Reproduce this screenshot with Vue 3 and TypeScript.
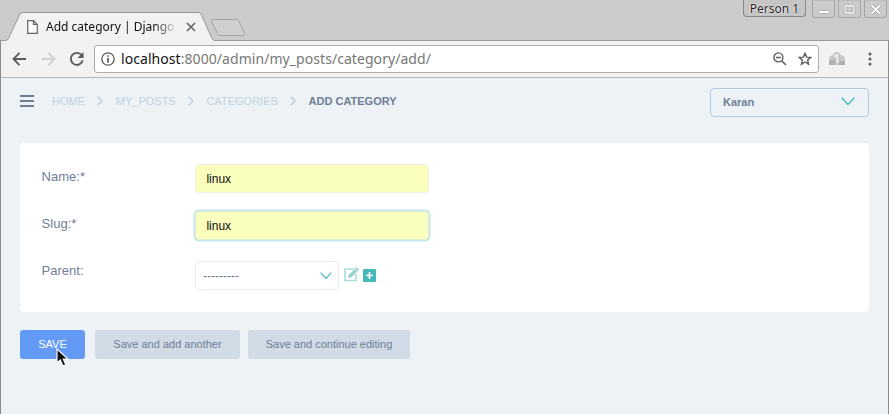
<script setup lang="ts">
import { ref } from 'vue'

interface Field { id: string; label: string; value: string; focused: boolean }

const crumbs: string[] = ['HOME', 'MY_POSTS', 'CATEGORIES']
const fields = ref<Field[]>([
  { id: 'name', label: 'Name:*', value: 'linux', focused: false },
  { id: 'slug', label: 'Slug:*', value: 'linux', focused: true },
])
</script>

<template>
  <div class="window">
    <header class="tabstrip">
      <svg class="tabshape" width="889" height="41" viewBox="0 0 889 41">
        <path d="M0 41V40.5H5.500Q7.500 40.500 8.500 38.500L19.500 15Q20.500 12.500 22.500 12.500H198.500Q200.500 12.500 201.500 15L212 38.500Q213 40.500 215 40.500H889V41Z" fill="#f2f2f2" />
        <path d="M0 40.500H5.500Q7.500 40.500 8.500 38.500L19.500 15Q20.500 12.500 22.500 12.500H198.500Q200.500 12.500 201.500 15L212 38.500Q213 40.500 215 40.500H889" fill="none" stroke="#999" />
        <path d="M213 19.500H236Q238 19.500 239 21.500L244.500 33.500Q245 35.500 243 35.500H220Q218.500 35.500 217.500 33.500L211.500 21.500Q211 19.500 213 19.500Z" fill="#d0d0d0" stroke="#a2a2a2" />
      </svg>
      <div class="tab">
        <svg class="doc" width="11" height="14" viewBox="0 0 11 14"><path d="M.7.700H6.500L10.300 4.500V13.300H.7ZM6.500.7V4.500H10.300" fill="#fafafa" stroke="#666" stroke-width="1.200" /></svg>
        <span class="title">Add category | Django s</span>
        <svg width="10" height="10" viewBox="0 0 10 10"><path d="M1 1L9 9M9 1L1 9" stroke="#666" stroke-width="1.700" /></svg>
      </div>
      <div class="controls">
        <span class="person">Person 1</span>
        <span class="ctl"><svg width="21" height="17"><rect x="5.500" y="9.500" width="11" height="3" rx="1" fill="#fff" stroke="#999" stroke-width=".7" /></svg></span>
        <span class="ctl"><svg width="21" height="17"><rect x="6" y="5" width="9" height="7" rx="1" fill="none" stroke="#999" stroke-width="2.600" /><rect x="6" y="5" width="9" height="7" rx="1" fill="none" stroke="#fff" stroke-width="1.300" /></svg></span>
        <span class="ctl"><svg width="21" height="17"><path d="M6.500 4.500L15 12.500M15 4.500L6.500 12.500" stroke="#999" stroke-width="3.200" /><path d="M6.500 4.500L15 12.500M15 4.500L6.500 12.500" stroke="#fff" stroke-width="2" /></svg></span>
      </div>
    </header>

    <div class="toolbar">
      <svg class="back" width="16" height="14" viewBox="0 0 16 14"><path d="M7.500 .8L1.500 7L7.500 13.200M2 7H14" fill="none" stroke="#5c5c5c" stroke-width="1.900" /></svg>
      <svg class="forward" width="15" height="14" viewBox="0 0 15 14"><path d="M7.500 .8L13.500 7L7.500 13.200M13 7H1" fill="none" stroke="#d0d0d0" stroke-width="1.900" /></svg>
      <svg class="reload" width="16" height="16" viewBox="0 0 16 16"><path d="M12.800 4.500A6 6 0 1 0 13.700 9.300" fill="none" stroke="#5c5c5c" stroke-width="1.900" /><path d="M14.500 1V7H8.500Z" fill="#5c5c5c" /></svg>
      <div class="address">
        <svg width="14" height="14" viewBox="0 0 14 14"><circle cx="7" cy="7" r="6.200" fill="none" stroke="#5c5c5c" stroke-width="1.300" /><path d="M7 3.200V4.800M7 6V10.700" stroke="#5c5c5c" stroke-width="1.700" /></svg>
        <span class="url"><b>localhost</b>:8000/admin/my_posts/category/add/</span>
        <svg class="lens" width="14" height="14" viewBox="0 0 14 14"><circle cx="5.400" cy="5.400" r="4.500" fill="none" stroke="#5c5c5c" stroke-width="1.400" /><path d="M8.700 8.700L13 13M3 5.400H7.800" stroke="#5c5c5c" stroke-width="1.500" /></svg>
        <svg width="14" height="14" viewBox="0 0 14 14"><path d="M7 1.300L8.600 5.100L12.800 5.400L9.600 8.100L10.600 12.200L7 10L3.400 12.200L4.400 8.100L1.200 5.400L5.400 5.100Z" fill="none" stroke="#5c5c5c" stroke-width="1.400" /></svg>
      </div>
      <svg class="ext" width="16" height="14" viewBox="0 0 16 14"><path d="M0 13V6Q1 3.500 4 3Q5.500 0 8 0Q10.500 0 12 3Q15 3.500 16 6V13Z" fill="#c8c8c8" /><path d="M0 8H6V13H0ZM10 9H16V13H10Z" fill="#b0b0b0" /><path d="M5.500 4.500L8.300 3V9.500H10" fill="none" stroke="#f5f5f5" stroke-width="1.500" /></svg>
      <svg class="dots" width="4" height="14" viewBox="0 0 4 14"><circle cx="2" cy="2" r="1.500" fill="#5c5c5c" /><circle cx="2" cy="7" r="1.500" fill="#5c5c5c" /><circle cx="2" cy="12" r="1.500" fill="#5c5c5c" /></svg>
    </div>

    <main class="page">
      <div class="topbar">
        <svg class="burger" width="14" height="12" viewBox="0 0 14 12"><path d="M0 1H14M0 6H14M0 11H14" stroke="#6f7e95" stroke-width="2" /></svg>
        <nav class="crumbs">
          <template v-for="crumb in crumbs" :key="crumb">
            <a>{{ crumb }}</a>
            <svg width="6" height="10" viewBox="0 0 6 10"><path d="M.8 .8L5 5L.8 9.200" fill="none" stroke="#bccfdf" stroke-width="1.500" /></svg>
          </template>
          <strong>ADD CATEGORY</strong>
        </nav>
        <div class="user">
          <span>Karan</span>
          <svg width="14" height="9" viewBox="0 0 14 9"><path d="M.7 .8L7 7.500L13.300 .8" fill="none" stroke="#45b9ba" stroke-width="1.300" /></svg>
        </div>
      </div>

      <form class="card" @submit.prevent>
        <div v-for="field in fields" :key="field.id" class="row">
          <label :for="field.id">{{ field.label }}</label>
          <input :id="field.id" v-model="field.value" type="text" :class="{ focused: field.focused }" />
        </div>
        <div class="row">
          <label>Parent:</label>
          <div class="select">
            <span>---------</span>
            <svg width="12" height="8" viewBox="0 0 12 8"><path d="M.6 .7L6 6.400L11.400 .7" fill="none" stroke="#45b9ba" stroke-width="1.200" /></svg>
          </div>
          <svg class="edit" width="16" height="16" viewBox="0 0 16 16"><path d="M9.500 3H1V14.500H12V8" fill="none" stroke="#a9dcdd" stroke-width="1.600" /><path d="M4 12L4.800 8.800L12.500 1.200L15 3.700L7.300 11.200Z" fill="#95cfd2" /><path d="M11 2.800L13.400 5.200" stroke="#fff" stroke-width=".8" /></svg>
          <svg class="add" width="13" height="13" viewBox="0 0 13 13"><rect width="13" height="13" rx="1" fill="#44b8ba" /><path d="M6.500 3V10M3 6.500H10" stroke="#fff" stroke-width="1.700" /></svg>
        </div>
      </form>

      <div class="actions">
        <button class="save">SAVE
          <svg class="cursor" width="14" height="20" viewBox="0 0 14 20"><path d="M1 1V15L4.300 12L7 18L9.800 16.800L7.200 11H12Z" fill="#111" stroke="#fff" stroke-width="1.100" /></svg>
        </button>
        <button class="another">Save and add another</button>
        <button class="continue">Save and continue editing</button>
      </div>
    </main>
  </div>
</template>

<style>
body { margin: 0; overflow: hidden; }
</style>

<style scoped>
* { box-sizing: border-box; }
svg { flex: none; display: block; }
.window { width: 889px; height: 414px; display: flex; flex-direction: column; overflow: hidden; background: #f2f2f2; font-family: "Liberation Sans", Arial, sans-serif; }
.tabstrip { position: relative; height: 41px; flex: none; display: flex; justify-content: space-between; background: #cbcbcb; }
.tabshape { position: absolute; left: 0; top: 0; }
.tab { position: relative; display: flex; align-items: center; width: 200px; height: 28px; margin-top: 13px; padding-left: 27px; }
.title { width: 129px; margin: 0 11px 0 8px; overflow: hidden; white-space: nowrap; font: 12px/18px "Noto Sans", sans-serif; color: #111; -webkit-mask-image: linear-gradient(90deg, #000 108px, transparent 132px); mask-image: linear-gradient(90deg, #000 108px, transparent 132px); }
.controls { position: relative; display: flex; gap: 3px; padding-right: 2px; }
.person { width: 63px; height: 17px; margin-right: 3px; border: 1px solid #888; border-top: 0; border-radius: 0 0 4px 4px; background: #c5c5c5; text-align: center; font: 12px/17px "Noto Sans", sans-serif; color: #222; text-shadow: 0 0 2px #fff, 0 0 1px #fff; }
.ctl { width: 23px; height: 18px; border: 1px solid #a5a5a5; border-top-color: #bbb; border-radius: 0 0 3px 3px; }
.toolbar { height: 37px; flex: none; display: flex; align-items: center; padding-left: 11px; border-left: 1px solid #8a8a8a; border-right: 1px solid #8a8a8a; border-bottom: 1px solid #b5b5b8; background: #f2f2f2; }
.forward { margin-left: 13px; }
.reload { margin-left: 13px; }
.address { display: flex; align-items: center; width: 725px; height: 28px; margin-left: 9px; padding: 0 6px; border: 1px solid #adadad; border-radius: 3px; background: #fff; }
.url { flex: 1; margin-left: 6px; font: 14px/20px "Noto Sans", sans-serif; letter-spacing: .06px; color: #777; white-space: nowrap; }
.url b { font-weight: 400; color: #111; }
.lens { margin: 0 11px 0 0; }
.ext { margin-left: 10px; }
.dots { margin-left: 23px; }
.page { flex: 1; margin: 0; padding: 10px 19px 0 19px; border-left: 1px solid #8a8a8a; border-right: 1px solid #8a8a8a; background: #ecf2f6; }
.topbar { display: flex; align-items: center; height: 29px; }
.burger { margin: -3px 18px 0 0; }
.crumbs { display: flex; align-items: center; flex: 1; margin-top: -3px; font-size: 11px; line-height: 14px; color: #c0d2e2; }
.crumbs svg { margin: 0 12.500px 0 12.300px; }
.crumbs strong { color: #6f7e95; }
.user { display: flex; align-items: center; justify-content: space-between; width: 159px; height: 29px; padding: 0 13px 2px 12px; border: 1px solid #b5cbe4; border-radius: 4px; font-size: 11px; font-weight: 700; color: #6f7e95; }
.card { display: flex; flex-direction: column; gap: 18px; height: 169px; margin-top: 26px; padding: 21px 22px; border-radius: 4px; background: #fff; }
.row { display: flex; height: 29px; }
.row label { width: 153px; padding-top: 5px; margin-left: -.4px; margin-right: .4px; font-size: 13px; line-height: 15px; color: #6f7e95; }
input { width: 234px; height: 29px; padding: 0 10.400px; border: 1px solid #eaf1e2; border-radius: 4px; outline: 0; background: #faffbd; font: 12px "Liberation Sans", Arial, sans-serif; color: #111; }
input.focused { border-color: #e1efd6; box-shadow: 0 0 0 1.500px #c5e5ed; }
.select { display: flex; align-items: center; justify-content: space-between; width: 144px; height: 29px; margin-top: 3px; padding: 0 6px 0 7px; border: 1px solid #e6eef3; border-radius: 4px; font-size: 12px; color: #6f7e95; }
.edit { margin: 8px 3px 0 5px; }
.add { margin-top: 11px; }
.actions { display: flex; margin-top: 18px; }
button { position: relative; height: 29px; padding: 0 0 2px; border: 0; border-radius: 3px; background: #d0dbe6; color: #6f7e95; font: 11px "Liberation Sans", Arial, sans-serif; }
.save { width: 65px; background: #639af5; color: #fff; }
.another { width: 145px; margin-left: 10px; }
.continue { width: 162px; margin-left: 8px; }
.cursor { position: absolute; left: 36px; top: 18px; }
</style>
